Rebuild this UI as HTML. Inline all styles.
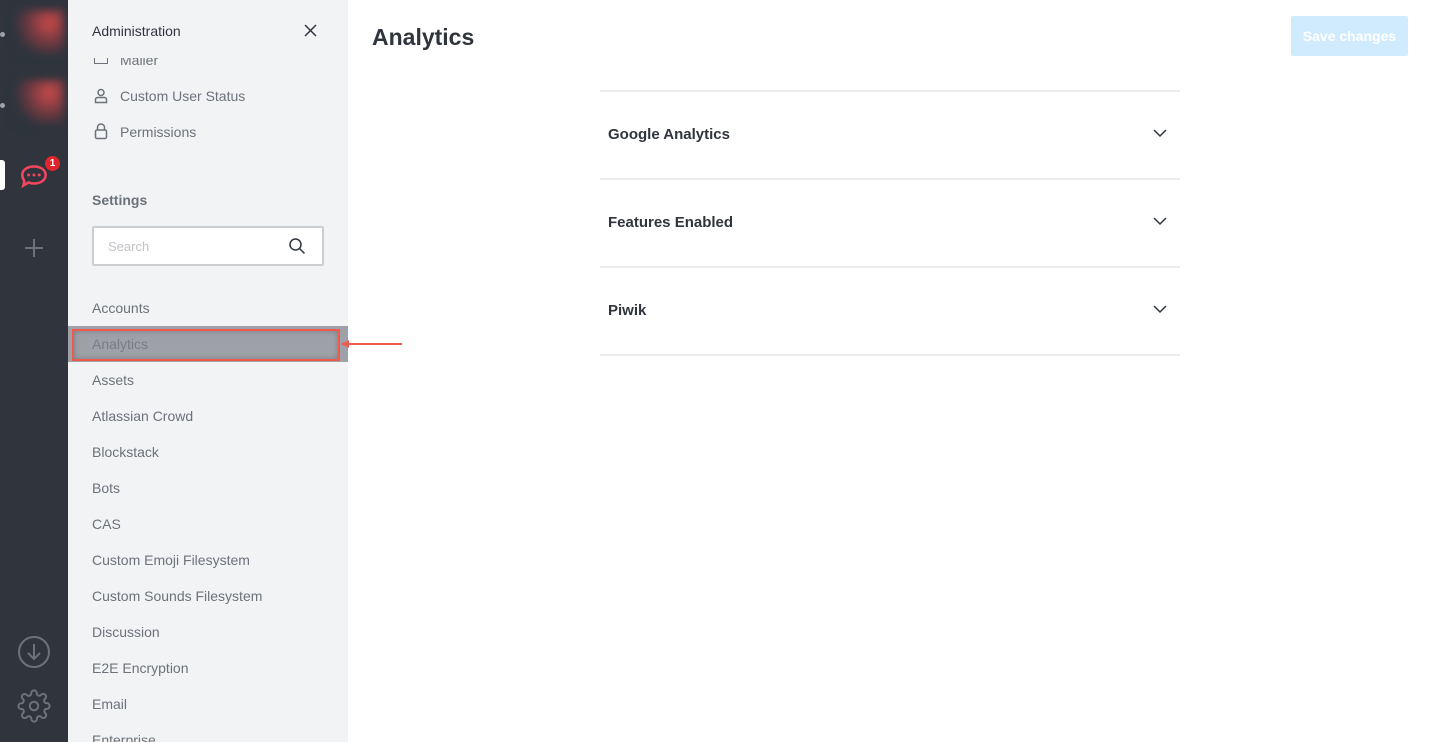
<!DOCTYPE html>
<html><head><style>
*{margin:0;padding:0;box-sizing:border-box}
body{width:1432px;height:742px;overflow:hidden;background:#fff;font-family:"Liberation Sans",sans-serif;position:relative}
.rail{position:absolute;left:0;top:0;width:68px;height:742px;background:#2f343d}
.side{position:absolute;left:68px;top:0;width:280px;height:742px;background:#f2f3f5;overflow:hidden}
.t{position:absolute;font-size:14px;color:#6c727a;left:24px}
.main h1{position:absolute;left:372px;top:24px;font-size:23px;font-weight:bold;color:#2f343d}
.btn{position:absolute;left:1291px;top:16px;width:117px;height:40px;background:#d1ebfe;border-radius:2px;color:#fff;font-weight:bold;font-size:14px;text-align:center;line-height:40px}
.line{position:absolute;left:600px;width:580px;height:2px;background:#ebecef}
.sec{position:absolute;left:608px;font-size:15px;font-weight:bold;color:#2f343d}
.chev{position:absolute;left:1153px}
</style></head><body>
<div class="rail">
 <div style="position:absolute;left:0;top:32px;width:5px;height:5px;border-radius:3px;background:#9ea2a8"></div>
 <div style="position:absolute;left:14px;top:10px;width:50px;height:44px;background:radial-gradient(circle at 70% 30%,#c94a4a,#6b3840 45%,#2f343d 75%);filter:blur(4px)"></div>
 <div style="position:absolute;left:0;top:103px;width:5px;height:5px;border-radius:3px;background:#9ea2a8"></div>
 <div style="position:absolute;left:14px;top:80px;width:50px;height:44px;background:radial-gradient(circle at 70% 30%,#c94a4a,#6b3840 45%,#2f343d 75%);filter:blur(4px)"></div>
 <div style="position:absolute;left:0;top:160px;width:5px;height:30px;background:#fff;border-radius:0 3px 3px 0"></div>
 <svg style="position:absolute;left:18px;top:160px" width="34" height="30" viewBox="0 0 32 28"><path d="M4 14c0-5 5-8 11-8s11 3 11 8-5 8-11 8c-2 0-3 0-5-1l-5 3 1-4c-1-2-2-4-2-6z" fill="none" stroke="#f5455c" stroke-width="2.4"/><circle cx="10" cy="14" r="1.4" fill="#f5455c"/><circle cx="15" cy="14" r="1.4" fill="#f5455c"/><circle cx="20" cy="14" r="1.4" fill="#f5455c"/></svg>
 <div style="position:absolute;left:45px;top:156px;width:15px;height:15px;border-radius:8px;background:#e0262d;color:#fff;font-size:10px;font-weight:bold;text-align:center;line-height:15px">1</div>
 <svg style="position:absolute;left:24px;top:238px" width="20" height="20"><path d="M10 1v18M1 10h18" stroke="#6c727a" stroke-width="2"/></svg>
 <svg style="position:absolute;left:17px;top:635px" width="34" height="34"><circle cx="17" cy="17" r="15" fill="none" stroke="#6c727a" stroke-width="2"/><path d="M17 9v15M11 18l6 6 6-6" fill="none" stroke="#6c727a" stroke-width="2"/></svg>
 <svg style="position:absolute;left:17px;top:689px" width="34" height="34" viewBox="0 0 24 24"><circle cx="12" cy="12" r="3" fill="none" stroke="#6c727a" stroke-width="1.4"/><path d="M19.4 15a1.7 1.7 0 0 0 .3 1.8l.1.1a2 2 0 1 1-2.8 2.8l-.1-.1a1.7 1.7 0 0 0-1.8-.3 1.7 1.7 0 0 0-1 1.5V21a2 2 0 1 1-4 0v-.1a1.7 1.7 0 0 0-1.100-1.5 1.7 1.7 0 0 0-1.8.3l-.1.1a2 2 0 1 1-2.8-2.8l.1-.1a1.7 1.7 0 0 0 .3-1.8 1.7 1.7 0 0 0-1.5-1H3a2 2 0 1 1 0-4h.1a1.7 1.7 0 0 0 1.5-1.1 1.7 1.7 0 0 0-.3-1.8l-.1-.1a2 2 0 1 1 2.8-2.8l.1.1a1.7 1.7 0 0 0 1.8.3H9a1.7 1.7 0 0 0 1-1.5V3a2 2 0 1 1 4 0v.1a1.7 1.7 0 0 0 1 1.5 1.7 1.7 0 0 0 1.8-.3l.1-.1a2 2 0 1 1 2.8 2.8l-.1.1a1.7 1.7 0 0 0-.3 1.8V9a1.7 1.7 0 0 0 1.5 1H21a2 2 0 1 1 0 4h-.1a1.7 1.7 0 0 0-1.5 1z" fill="none" stroke="#6c727a" stroke-width="1.4"/></svg>
</div>
<div class="side">
 <div class="t" style="top:52px;left:52px">Mailer</div>
 <div style="position:absolute;left:26px;top:50px;width:14px;height:14px;border:1.5px solid #6c727a"></div>
 <div style="position:absolute;left:0;top:0;width:280px;height:58px;background:#f2f3f5"></div>
 <div class="t" style="top:23px;color:#2f343d">Administration</div>
 <svg style="position:absolute;left:236px;top:24px" width="13" height="13"><path d="M1 1l11 11M12 1L1 12" stroke="#2f343d" stroke-width="1.5"/></svg>
 <svg style="position:absolute;left:26px;top:88px" width="14" height="16"><circle cx="7" cy="4.5" r="3" fill="none" stroke="#6c727a" stroke-width="1.5"/><path d="M1.5 14.5v-3a2 2 0 0 1 2-2h7a2 2 0 0 1 2 2v3z" fill="none" stroke="#6c727a" stroke-width="1.5"/></svg>
 <div class="t" style="top:88px;left:52px">Custom User Status</div>
 <svg style="position:absolute;left:26px;top:123px" width="14" height="17"><path d="M3.5 7V4.5a3.5 3.5 0 0 1 7 0V7" fill="none" stroke="#6c727a" stroke-width="1.5"/><rect x="1.5" y="7" width="11" height="8.5" rx="1.5" fill="none" stroke="#6c727a" stroke-width="1.5"/></svg>
 <div class="t" style="top:124px;left:52px">Permissions</div>
 <div class="t" style="top:192px;font-weight:bold;color:#6c727a">Settings</div>
 <div style="position:absolute;left:24px;top:226px;width:232px;height:40px;background:#fff;border:2px solid #cbced1;border-radius:2px"></div>
 <div class="t" style="top:239px;left:40px;font-size:13px;color:#c0c3c7">Search</div>
 <svg style="position:absolute;left:220px;top:237px" width="18" height="18"><circle cx="7.5" cy="7.5" r="5.5" fill="none" stroke="#2f343d" stroke-width="1.5"/><path d="M11.5 11.5l5 5" stroke="#2f343d" stroke-width="1.5"/></svg>
 <div class="t" style="top:300px">Accounts</div>
 <div style="position:absolute;left:0;top:326px;width:280px;height:36px;background:#9ea2a8"></div>
 <div style="position:absolute;left:4px;top:329px;width:268px;height:32px;border:2px solid #ef5a4c;box-shadow:inset 0 0 6px rgba(0,0,0,.25)"></div>
 <div class="t" style="top:336px;color:#787d84">Analytics</div>
 <div class="t" style="top:372px">Assets</div>
 <div class="t" style="top:408px">Atlassian Crowd</div>
 <div class="t" style="top:444px">Blockstack</div>
 <div class="t" style="top:480px">Bots</div>
 <div class="t" style="top:516px">CAS</div>
 <div class="t" style="top:552px">Custom Emoji Filesystem</div>
 <div class="t" style="top:588px">Custom Sounds Filesystem</div>
 <div class="t" style="top:624px">Discussion</div>
 <div class="t" style="top:660px">E2E Encryption</div>
 <div class="t" style="top:696px">Email</div>
 <div class="t" style="top:732px">Enterprise</div>
</div>
<svg style="position:absolute;left:338px;top:338px" width="66" height="12"><path d="M4 6h60" stroke="#ef5a4c" stroke-width="2"/><path d="M3 6l8-4v8z" fill="#ef5a4c"/></svg>
<div class="main"><h1>Analytics</h1></div>
<div class="btn">Save changes</div>
<div class="line" style="top:90px"></div>
<div class="sec" style="top:126px">Google Analytics</div>
<div class="line" style="top:178px"></div>
<div class="sec" style="top:214px">Features Enabled</div>
<div class="line" style="top:266px"></div>
<div class="sec" style="top:302px">Piwik</div>
<div class="line" style="top:354px"></div>
<svg class="chev" style="top:128px" width="14" height="10"><path d="M1 2l6 6 6-6" fill="none" stroke="#2f343d" stroke-width="1.5"/></svg>
<svg class="chev" style="top:216px" width="14" height="10"><path d="M1 2l6 6 6-6" fill="none" stroke="#2f343d" stroke-width="1.5"/></svg>
<svg class="chev" style="top:304px" width="14" height="10"><path d="M1 2l6 6 6-6" fill="none" stroke="#2f343d" stroke-width="1.5"/></svg>
</body></html>
